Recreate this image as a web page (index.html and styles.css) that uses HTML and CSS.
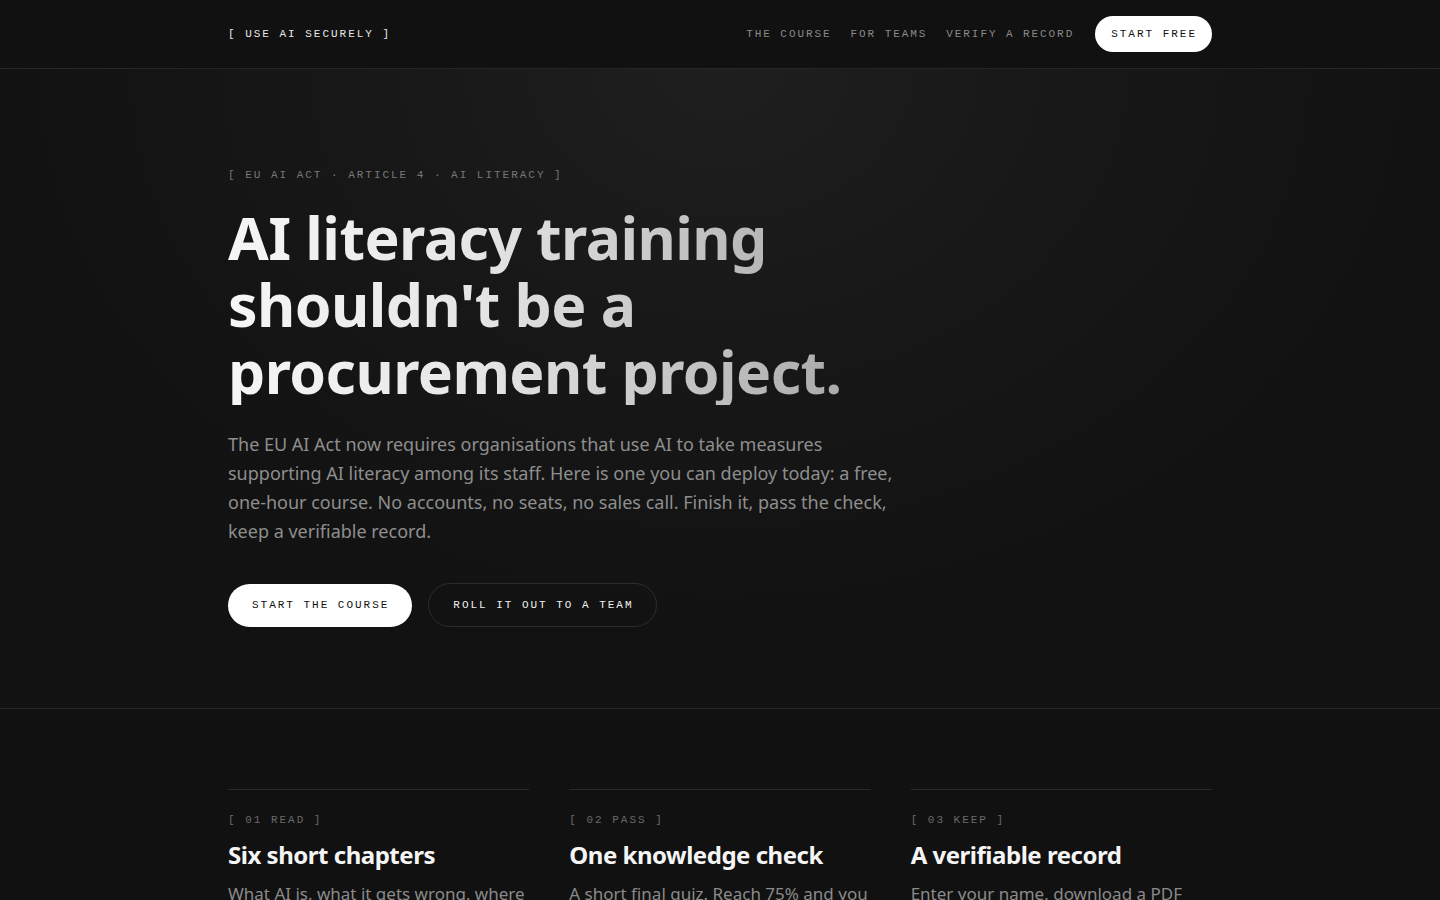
FILE: index.html
```html
<!DOCTYPE html>
<html lang="en">
<head>
<meta charset="utf-8">
<title>Use AI Securely</title>
<link rel="stylesheet" href="styles.css">
</head>
<body>
<header class="site-header">
  <div class="container header-inner">
    <a class="logo" href="#">[ USE AI SECURELY ]</a>
    <nav class="nav">
      <a href="#">THE COURSE</a>
      <a href="#">FOR TEAMS</a>
      <a href="#">VERIFY A RECORD</a>
      <a class="btn btn-light btn-small" href="#">START FREE</a>
    </nav>
  </div>
</header>
<main>
  <section class="hero">
    <div class="container">
      <p class="eyebrow">[ EU AI ACT · ARTICLE 4 · AI LITERACY ]</p>
      <h1 class="headline">AI literacy training<br>shouldn't be a<br>procurement project.</h1>
      <p class="lead">The EU AI Act now requires organisations that use AI to take measures supporting AI literacy among its staff. Here is one you can deploy today: a free, one-hour course. No accounts, no seats, no sales call. Finish it, pass the check, keep a verifiable record.</p>
      <div class="actions">
        <a class="btn btn-light" href="#">START THE COURSE</a>
        <a class="btn btn-outline" href="#">ROLL IT OUT TO A TEAM</a>
      </div>
    </div>
  </section>
  <section class="steps">
    <div class="container steps-grid">
      <article class="step">
        <p class="step-label">[ 01 READ ]</p>
        <h2 class="step-title">Six short chapters</h2>
        <p class="step-text">What AI is, what it gets wrong, where your data goes, and how to use it safely at work.</p>
      </article>
      <article class="step">
        <p class="step-label">[ 02 PASS ]</p>
        <h2 class="step-title">One knowledge check</h2>
        <p class="step-text">A short final quiz. Reach 75% and you have completed the course.</p>
      </article>
      <article class="step">
        <p class="step-label">[ 03 KEEP ]</p>
        <h2 class="step-title">A verifiable record</h2>
        <p class="step-text">Enter your name, download a PDF certificate anyone can verify online.</p>
      </article>
    </div>
  </section>
</main>
</body>
</html>
```
FILE: styles.css
```css
* { box-sizing: border-box; }
html, body { margin: 0; padding: 0; }
body {
  background: #111111;
  color: #f2f2f2;
  font-family: "Noto Sans", "Open Sans", sans-serif;
}
a { color: inherit; text-decoration: none; }
p, h1, h2 { margin: 0; }

.container {
  width: 984px;
  margin: 0 auto;
}

.site-header {
  height: 69px;
  border-bottom: 1px solid #262626;
  background: #111111;
}
.header-inner {
  height: 68px;
  display: flex;
  align-items: center;
  justify-content: space-between;
}
.logo {
  font-family: "Liberation Mono", "Courier New", monospace;
  font-size: 11px;
  letter-spacing: 0.18em;
  color: #e8e8e8;
}
.nav {
  display: flex;
  align-items: center;
  gap: 19px;
  font-family: "Liberation Mono", "Courier New", monospace;
  font-size: 11px;
  letter-spacing: 0.175em;
  color: #8a8a8a;
}

.btn {
  display: inline-flex;
  align-items: center;
  justify-content: center;
  font-family: "Liberation Mono", "Courier New", monospace;
  font-size: 11px;
  letter-spacing: 0.18em;
  border-radius: 999px;
  height: 43px;
  padding: 0 23px 0 24px;
}
.btn-small {
  height: 36px;
  padding: 0 15px 0 16px;
  margin-left: 2px;
}
.btn-light {
  background: #ffffff;
  color: #111111;
}
.nav .btn-light { color: #111111; }
.btn-outline {
  background: transparent;
  color: #f0f0f0;
  border: 1px solid #2c2c2c;
  height: 44px;
  padding: 0 22px 0 24px;
}

.hero {
  background:
    radial-gradient(ellipse 720px 560px at 50% 0%, #1f1f1f 0%, #181818 45%, #121212 100%);
  background-color: #121212;
  padding: 99px 0 81px;
  border-bottom: 1px solid #262626;
}
.eyebrow {
  font-family: "Liberation Mono", "Courier New", monospace;
  font-size: 11px;
  letter-spacing: 0.18em;
  color: #777777;
  line-height: 14px;
}
.headline {
  margin-top: 22px;
  font-size: 59px;
  font-weight: 700;
  line-height: 67px;
  letter-spacing: -0.01em;
  max-width: 700px;
  background: linear-gradient(90deg, #f6f6f6 0%, #e6e6e6 35%, #a8a8a8 90%);
  -webkit-background-clip: text;
  background-clip: text;
  color: transparent;
}
.lead {
  margin-top: 25px;
  max-width: 680px;
  font-size: 18px;
  line-height: 29px;
  color: #8e8e8e;
}
.actions {
  margin-top: 37px;
  display: flex;
  align-items: center;
  gap: 16px;
}

.steps {
  padding: 80px 0 0;
  background: #111111;
}
.steps-grid {
  display: grid;
  grid-template-columns: repeat(3, 1fr);
  gap: 40px;
}
.step {
  border-top: 1px solid #2a2a2a;
  padding-top: 23px;
}
.step-label {
  font-family: "Liberation Mono", "Courier New", monospace;
  font-size: 11px;
  letter-spacing: 0.18em;
  color: #6a6a6a;
  line-height: 14px;
}
.step-title {
  margin-top: 12px;
  font-size: 24px;
  font-weight: 700;
  line-height: 32px;
  letter-spacing: -0.02em;
  color: #f5f5f5;
}
.step-text {
  margin-top: 9px;
  font-size: 17px;
  line-height: 27px;
  color: #8a8a8a;
}
```
